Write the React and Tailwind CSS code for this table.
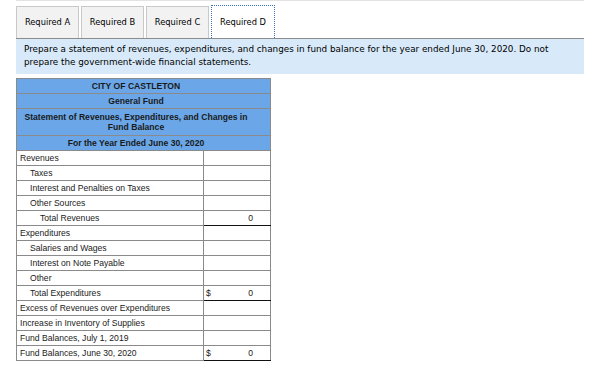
import React from 'react';

const tabs = ['Required A', 'Required B', 'Required C', 'Required D'];

const rows = [
    { label: 'Revenues', indent: 0 },
    { label: 'Taxes', indent: 1 },
    { label: 'Interest and Penalties on Taxes', indent: 1 },
    { label: 'Other Sources', indent: 1 },
    { label: 'Total Revenues', indent: 2, value: '0', total: true },
    { label: 'Expenditures', indent: 0 },
    { label: 'Salaries and Wages', indent: 1 },
    { label: 'Interest on Note Payable', indent: 1 },
    { label: 'Other', indent: 1 },
    { label: 'Total Expenditures', indent: 1, value: '0', dollar: true, total: true },
    { label: 'Excess of Revenues over Expenditures', indent: 0 },
    { label: 'Increase in Inventory of Supplies', indent: 0 },
    { label: 'Fund Balances, July 1, 2019', indent: 0 },
    { label: 'Fund Balances, June 30, 2020', indent: 0, value: '0', dollar: true, total: true },
];

const indents = ['pl-[3px]', 'pl-[13px]', 'pl-[23px]'];

const headCell = 'bg-[#6ba7e8] border border-[#8a8a8a] text-center font-bold p-0 pr-[15px]';

const App = () => {
    return (
        <div className="w-[609px] h-[365px] bg-white font-['DejaVu_Sans',Verdana,sans-serif] text-[#222]">
            <div className="ml-[16px] w-[568px] h-px bg-[#e3e3e3]" />

            {/* tabs */}
            <div className="ml-[16px] mt-[4px] flex items-end gap-[2px] h-[33px]">
                {tabs.map((t, i) =>
                    i === 3 ? (
                        <div
                            key={t}
                            className="w-[64px] h-[33px] bg-white border border-dotted border-[#3b74c4] border-b-0 flex items-center justify-center text-[8.3px] text-black"
                        >
                            {t}
                        </div>
                    ) : (
                        <div
                            key={t}
                            className="w-[63px] h-[32px] bg-[#f2f2f2] border border-[#c9c9c9] border-b-0 flex items-center justify-center text-[8.3px] text-black"
                        >
                            {t}
                        </div>
                    )
                )}
            </div>

            {/* instructions */}
            <div className="ml-[16px] w-[568px] h-[36px] bg-[#d8eaf9] border-t border-[#8c8c8c] pl-[8px] pt-[4px] text-[8.8px] leading-[13px] text-black">
                Prepare a statement of revenues, expenditures, and changes in fund balance for the year ended June 30, 2020. Do not
                <br />
                prepare the government-wide financial statements.
            </div>

            {/* statement */}
            <table className="ml-[16px] mt-[4px] border-collapse font-['Liberation_Sans',Arial,sans-serif] text-[8.6px] text-[#1a1a1a]">
                <tbody>
                    <tr className="h-[15px]">
                        <td colSpan={2} className={headCell}>
                            CITY OF CASTLETON
                        </td>
                    </tr>
                    <tr className="h-[15px]">
                        <td colSpan={2} className={headCell}>
                            General Fund
                        </td>
                    </tr>
                    <tr className="h-[27px]">
                        <td colSpan={2} className={`${headCell} leading-[10px]`}>
                            Statement of Revenues, Expenditures, and Changes in
                            <br />
                            Fund Balance
                        </td>
                    </tr>
                    <tr className="h-[15px]">
                        <td colSpan={2} className={headCell}>
                            For the Year Ended June 30, 2020
                        </td>
                    </tr>
                    {rows.map((r) => (
                        <tr key={r.label} className="h-[15px]">
                            <td className={`w-[187px] border border-[#8a8a8a] p-0 leading-[13px] ${indents[r.indent]}`}>{r.label}</td>
                            <td
                                className={`w-[67px] border border-[#8a8a8a] p-0 leading-[13px] ${
                                    r.total ? 'border-t-[#111] border-b-[#111]' : ''
                                }`}
                            >
                                {r.value && (
                                    <div className="flex justify-between pl-[2px] pr-[17px]">
                                        <span>{r.dollar ? '$' : ''}</span>
                                        <span>{r.value}</span>
                                    </div>
                                )}
                            </td>
                        </tr>
                    ))}
                </tbody>
            </table>
        </div>
    );
};

export default App;
